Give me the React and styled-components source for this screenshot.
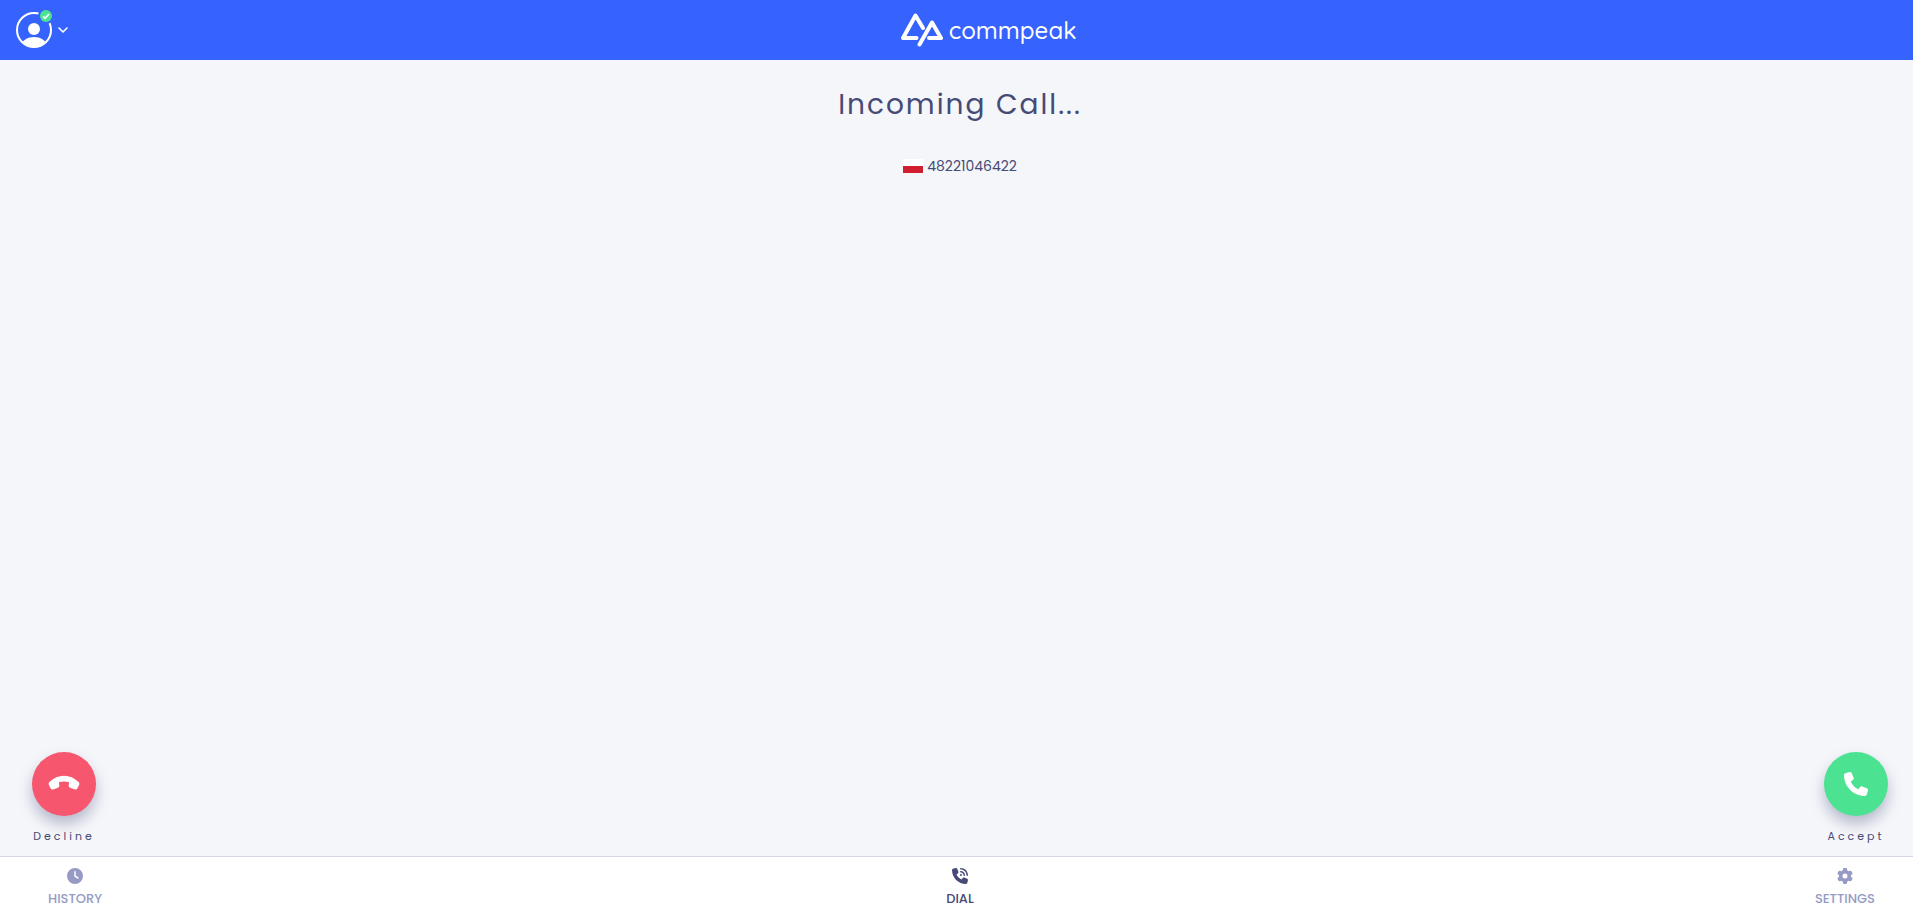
import styled, { createGlobalStyle } from "styled-components"
import { FaClock, FaGear, FaPhone, FaPhoneVolume } from "react-icons/fa6"

export default function App() {
    return (
        <>
            <GlobalStyle />
            <Div_Page>
                <Header_TopBar>
                    <Button_User type="button" aria-label="User menu">
                        <AvatarIcon />
                        <ChevronIcon />
                    </Button_User>
                    <A_Logo href="/">
                        <LogoMark />
                        <span>commpeak</span>
                    </A_Logo>
                </Header_TopBar>

                <Main_Call>
                    <H1_Title>Incoming Call...</H1_Title>
                    <Div_Caller>
                        <Span_Flag />
                        <span>48221046422</span>
                    </Div_Caller>

                    <Div_Actions>
                        <CallAction label="Decline" color="#f7566f" icon={<HangUpIcon />} />
                        <CallAction label="Accept" color="#4be292" icon={<FaPhone />} />
                    </Div_Actions>
                </Main_Call>

                <Nav_Tabs>
                    <A_Tab href="#history"><FaClock />HISTORY</A_Tab>
                    <A_Tab href="#dial" $active aria-current="page"><FaPhoneVolume />DIAL</A_Tab>
                    <A_Tab href="#settings"><FaGear />SETTINGS</A_Tab>
                </Nav_Tabs>
            </Div_Page>
        </>
    )
}

function CallAction({ label, color, icon }) {
    const id = `call-${label.toLowerCase()}`

    return (
        <Div_Action>
            <Button_Round id={id} type="button" $color={color}>
                {icon}
            </Button_Round>
            <label htmlFor={id}>{label}</label>
        </Div_Action>
    )
}

const AvatarIcon = () => (
    <svg width="38" height="40" viewBox="0 2 38 40" aria-hidden="true">
        <defs>
            <clipPath id="avatar-clip"><circle cx="18" cy="22" r="17" /></clipPath>
        </defs>
        <circle cx="18" cy="22" r="17" fill="none" stroke="#fff" strokeWidth="2" />
        <g fill="#fff" clipPath="url(#avatar-clip)">
            <circle cx="18" cy="21" r="6" />
            <path d="M5 38c1-6 7-9 13-9s12 3 13 9v4H5z" />
        </g>
        <circle cx="30" cy="8" r="8" fill="#3663fe" />
        <circle cx="30" cy="8" r="6" fill="#4be292" />
        <path d="m27 8.300 2 2 4-4.300" fill="none" stroke="#fff" strokeWidth="1.800" />
    </svg>
)

const ChevronIcon = () => (
    <svg width="10" height="6" viewBox="0 0 10 6" aria-hidden="true">
        <path d="m1 1 4 4 4-4" fill="none" stroke="#fff" strokeWidth="1.600" strokeLinecap="round" strokeLinejoin="round" />
    </svg>
)

const LogoMark = () => (
    <svg width="42" height="34" viewBox="0 0 42 34" aria-hidden="true">
        <g fill="none" stroke="#fff" strokeWidth="4" strokeLinecap="round" strokeLinejoin="round">
            <path d="M15.500 25H2L14.500 2.500 22 15" />
            <path d="M18.500 31.500 31 9.500l9 15.500H28" />
        </g>
    </svg>
)

const HangUpIcon = () => (
    <svg width="32" height="32" viewBox="0 0 32 32" aria-hidden="true">
        <path
            d="M.9 17C.4 15.900.6 15 1.400 14.100 9.500 5.500 22.500 5.500 30.600 14.100c.8.900 1 1.800.5 2.900l-1.800 3.500c-.5.900-1.400 1.200-2.400.9l-4.800-1.700c-1-.4-1.500-1.200-1.400-2.200l.3-3.500c-3-.8-7-.8-10 0l.3 3.500c.1 1-.4 1.800-1.400 2.200l-4.800 1.700c-1 .3-1.900 0-2.400-.9z"
            fill="currentColor"
        />
    </svg>
)

const GlobalStyle = createGlobalStyle`
    * {
        box-sizing: border-box;
    }

    body {
        margin: 0;
        font-family: Poppins, Inter, "Liberation Sans", sans-serif;
        color: #464a75;
        background: #f4f6fa;
    }
`;

const Div_Page = styled.div`
    display: flex;
    flex-direction: column;
    min-height: 100vh;
`;

const Header_TopBar = styled.header`
    display: flex;
    align-items: center;
    height: 60px;
    padding-left: 16px;
    background: #3663fe;
`;

const Button_User = styled.button`
    display: flex;
    align-items: center;
    gap: 4px;
    padding: 0;
    border: 0;
    background: none;
    cursor: pointer;
`;

const A_Logo = styled.a`
    display: flex;
    flex: 1;
    align-items: center;
    justify-content: center;
    gap: 6px;
    margin-right: 4px;
    color: #fff;
    font-family: Quicksand, Lato, sans-serif;
    font-size: 24px;
    font-weight: 500;
    line-height: 32px;
    text-decoration: none;
`;

const Main_Call = styled.main`
    display: flex;
    flex: 1;
    flex-direction: column;
    align-items: center;
    padding: 25px 25px 12px 32px;
`;

const H1_Title = styled.h1`
    margin: 0;
    font-size: 28px;
    font-weight: 400;
    line-height: 40px;
    letter-spacing: 2px;
`;

const Div_Caller = styled.div`
    display: flex;
    align-items: center;
    gap: 4px;
    margin-top: 31px;
    font-size: 14px;
    line-height: 20px;
`;

const Span_Flag = styled.span`
    width: 20px;
    height: 14px;
    background: linear-gradient(#fff 50%, #d01f2e 50%);
`;

const Div_Actions = styled.div`
    display: flex;
    justify-content: space-between;
    width: 100%;
    margin-top: auto;
`;

const Div_Action = styled.div`
    display: flex;
    flex-direction: column;
    align-items: center;
    width: 64px;
    gap: 12px;
    font-size: 11px;
    line-height: 16px;
    letter-spacing: 3px;
`;

const Button_Round = styled.button`
    display: flex;
    align-items: center;
    justify-content: center;
    width: 64px;
    height: 64px;
    padding: 0;
    border: 0;
    border-radius: 50%;
    color: #fff;
    font-size: 24px;
    background: ${({ $color }) => $color};
    box-shadow: 0 8px 14px rgba(70, 74, 117, 0.35);
    cursor: pointer;
`;

const Nav_Tabs = styled.nav`
    display: flex;
    justify-content: space-between;
    height: 51px;
    padding: 11px 38px 0 45px;
    border-top: 1px solid #d3d6e6;
    background: #fff;
`;

const A_Tab = styled.a`
    display: flex;
    flex-direction: column;
    align-items: center;
    gap: 7px;
    min-width: 60px;
    font-size: 13px;
    font-weight: 500;
    line-height: 16px;
    color: ${({ $active }) => ($active ? '#464a75' : '#969bc5')};
    text-decoration: none;

    svg {
        width: 16px;
        height: 16px;
    }
`;
